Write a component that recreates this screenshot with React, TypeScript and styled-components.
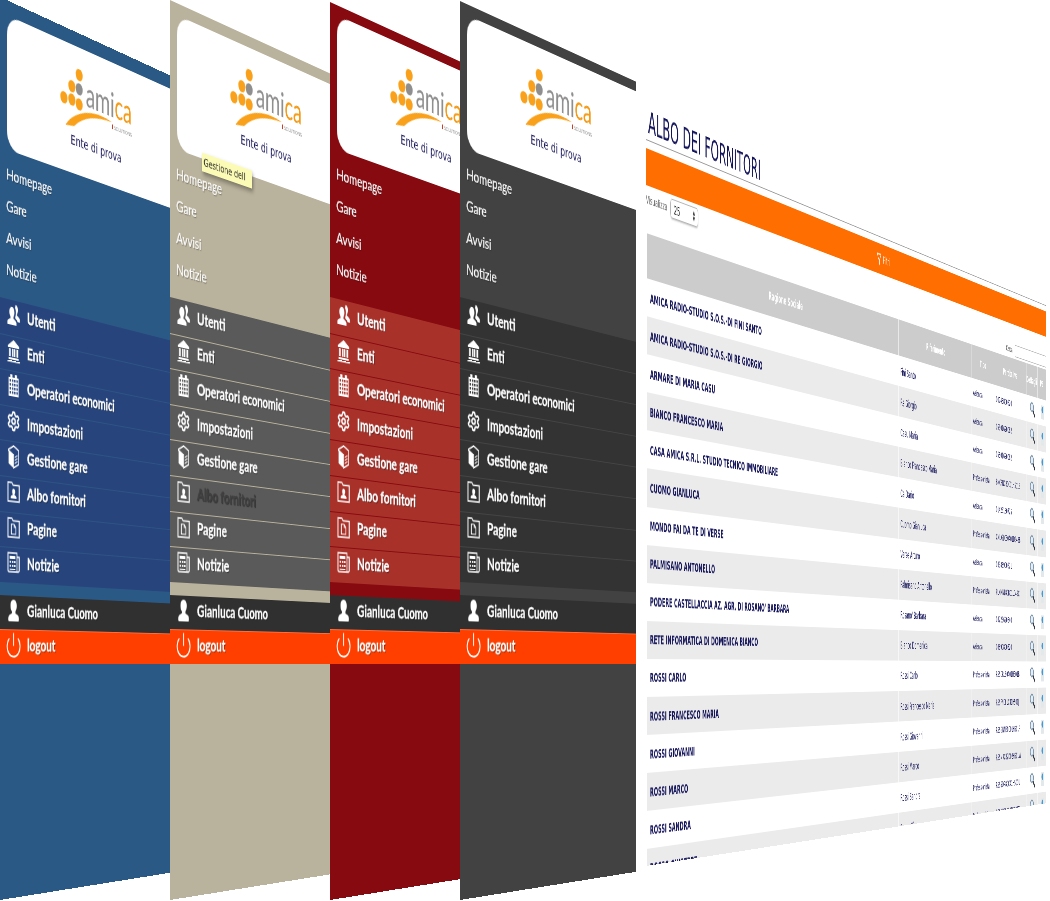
import React from "react";
import styled, { createGlobalStyle } from "styled-components";
import { Filter, Power, Settings } from "lucide-react";

//~~~~~~~~~~~~~~~~~~~Perspective helper
// every sheet leans away towards a vanishing point on the y = 667 line
const HORIZON = 667;
const leaning = (x0: number, y0: number, a: number, g: number) =>
  `matrix3d(${a + x0 * g},${HORIZON * g},0,${g},0,1,0,0,0,0,1,0,${x0},${y0},0,1)`;

//~~~~~~~~~~~~~~~~~~~Data
interface Theme {
  x: number;
  inset: number;
  bg: string;
  nav: string;
  line: string;
  tooltip?: boolean;
  dimAlbo?: boolean;
}

const THEMES: Theme[] = [
  { x: 0, inset: 0, bg: "#2b5985", nav: "#27457c", line: "#2c5484" },
  { x: 170, inset: 3, bg: "#b9b29c", nav: "#5a5a5a", line: "#b9b29c", tooltip: true, dimAlbo: true },
  { x: 330, inset: 5, bg: "#870a10", nav: "#a8322a", line: "#870a10" },
  { x: 460, inset: 4, bg: "#424242", nav: "#333333", line: "#444444" },
];

const LINKS = ["Homepage", "Gare", "Avvisi", "Notizie"];

const MENU = [
  { icon: "users", label: "Utenti" },
  { icon: "bank", label: "Enti" },
  { icon: "building", label: "Operatori economici" },
  { icon: "cog", label: "Impostazioni" },
  { icon: "box", label: "Gestione gare" },
  { icon: "folderUser", label: "Albo fornitori" },
  { icon: "folderFile", label: "Pagine" },
  { icon: "news", label: "Notizie" },
];

const AZ = "Azienda";
const PR = "Professionista";
const SUPPLIERS = [
  ["AMICA RADIO-STUDIO S.O.S.-DI FINI SANTO", "Fini Santo", AZ, "00745800820"],
  ["AMICA RADIO-STUDIO S.O.S.-DI RE GIORGIO", "Re Giorgio", AZ, "05501690082"],
  ["ARMARE DI MARIA CASU", "Casu Maria", AZ, "05501690082"],
  ["BIANCO FRANCESCO MARIA", "Bianco Francesco Maria", PR, "BNCFNC80C01H501B"],
  ["CASA AMICA S.R.L. STUDIO TECNICO IMMOBILIARE", "Ca Dario", AZ, "01428180725"],
  ["CUOMO GIANLUCA", "Cuomo Gianluca", PR, "CMUGLC80A01D643B"],
  ["MONDO FAI DA TE DI VERSE", "Verse Arturo", AZ, "03386900821"],
  ["PALMISANO ANTONELLO", "Palmisano Antonello", PR, "PLMNNL80B01L049C"],
  ["PODERE CASTELLACCIA AZ. AGR. DI ROSANO' BARBARA", "Rosano' Barbara", AZ, "03225690640"],
  ["RETE INFORMATICA DI DOMENICA BIANCO", "Bianco Domenica", AZ, "08890800820"],
  ["ROSSI CARLO", "Rossi Carlo", PR, "RSSCRL80A01H501B"],
  ["ROSSI FRANCESCO MARIA", "Rossi Francesco Maria", PR, "RSSFNC81C41H501J"],
  ["ROSSI GIOVANNI", "Rossi Giovanni", PR, "RSSGNN80C01H501P"],
  ["ROSSI MARCO", "Rossi Marco", PR, "RSSMRC82D02H501W"],
  ["ROSSI SANDRA", "Rossi Sandra", PR, "RSSSDR80C41H501U"],
  ["ROSSO GIUSEPPE", "Rosso Giuseppe", PR, "RSSGPP80A01H501T"],
];

//~~~~~~~~~~~~~~~~~~~Styled Components
const GlobalStyle = createGlobalStyle`
  html, body {
    margin: 0;
    background: #ffffff;
  }
`;

const Stage = styled.div`
  position: relative;
  width: 1050px;
  height: 901px;
  overflow: hidden;
  background: #ffffff;
`;

const Sheet = styled.section<{ $x: number; $inset: number; $bg: string }>`
  position: absolute;
  left: 0;
  top: 0;
  width: 320px;
  height: 903px;
  padding-top: 15px;
  box-sizing: border-box;
  display: flex;
  flex-direction: column;
  background: linear-gradient(
    transparent ${({ $inset }) => $inset}px,
    ${({ $bg }) => $bg} ${({ $inset }) => $inset}px
  );
  transform-origin: 0 0;
  transform: ${({ $x }) => leaning($x, -3, 0.625, 0.00043)};
  font-family: Lato, "Open Sans", sans-serif;
  color: #ffffff;
`;

const BrandCard = styled.div`
  margin-left: 11px;
  height: 135px;
  padding-top: 23px;
  box-sizing: border-box;
  background: #ffffff;
  border-radius: 20px 0 0 20px;
  display: flex;
  flex-direction: column;
  align-items: center;
`;

const EnteName = styled.div`
  font-family: "DejaVu Sans", sans-serif;
  font-size: 14px;
  line-height: 18px;
  color: #1c1a5c;
`;

const TopLinks = styled.ul`
  list-style: none;
  margin: 8px 0 14px;
  padding: 0;
`;

const TopLink = styled.li`
  height: 32px;
  line-height: 32px;
  padding-left: 10px;
  font-size: 16px;
  text-shadow: 1px 1px 1px rgba(0, 0, 0, 0.35);
  -webkit-text-stroke: 0.2px #ffffff;
`;

const Menu = styled.nav<{ $bg: string; $line: string }>`
  background: ${({ $bg }) => $bg};
  display: flex;
  flex-direction: column;
  & > div + div {
    border-top: 1px solid ${({ $line }) => $line};
  }
`;

const MenuRow = styled.div<{ $dim?: boolean }>`
  height: 35.6px;
  box-sizing: border-box;
  padding: 0 0 6px 11px;
  display: flex;
  align-items: center;
  gap: 11px;
  font-size: 17px;
  font-weight: 700;
  white-space: nowrap;
  color: ${({ $dim }) => ($dim ? "#404040" : "#ffffff")};
  text-shadow: 1px 1px 1px rgba(0, 0, 0, 0.45);
  -webkit-text-stroke: 0.3px ${({ $dim }) => ($dim ? "#404040" : "#ffffff")};
  & > svg {
    flex: none;
    color: #ffffff;
    -webkit-text-stroke: 0;
  }
`;

const UserRow = styled(MenuRow)`
  margin-top: 13px;
  height: 34px;
  padding-bottom: 4px;
  background: #303030;
`;

const LogoutRow = styled(MenuRow)`
  height: 35px;
  padding-bottom: 4px;
  background: #ff3f00;
  border-top: 1px solid rgba(255, 255, 255, 0.25);
  & > svg {
    margin: 0 -3px;
  }
`;

const Tooltip = styled.div`
  position: absolute;
  left: 52px;
  top: 144px;
  width: 84px;
  height: 19px;
  overflow: hidden;
  background: #fbfbb6;
  color: #222222;
  font-family: "DejaVu Sans", sans-serif;
  font-size: 11px;
  line-height: 19px;
  padding-left: 3px;
  white-space: nowrap;
  box-shadow: 2px 3px 5px rgba(0, 0, 0, 0.35);
`;

const Page = styled.main`
  position: absolute;
  left: 0;
  top: 0;
  width: 1460px;
  height: 866px;
  overflow: hidden;
  padding-top: 100px;
  box-sizing: border-box;
  transform-origin: 0 0;
  transform: ${leaning(646, 0, 0.4, 0.000315)};
  font-family: "DejaVu Sans", sans-serif;
  color: #14145a;
`;

const PageTitle = styled.h1`
  margin: 0;
  height: 40px;
  padding-left: 5px;
  box-sizing: border-box;
  border-bottom: 1px solid #999999;
  font-size: 29.5px;
  font-weight: 400;
  line-height: 44px;
  white-space: nowrap;
`;

const FilterBar = styled.div`
  margin-top: 8px;
  height: 37px;
  background: #ff6e00;
  color: #ffffff;
  font-size: 12px;
  display: flex;
  align-items: center;
  justify-content: center;
  gap: 6px;
`;

const Toolbar = styled.div`
  height: 48px;
  display: flex;
  justify-content: space-between;
`;

const LengthPicker = styled.div`
  padding-top: 3px;
  height: 22px;
  display: flex;
  align-items: center;
  gap: 8px;
  font-size: 11px;
  color: #666666;
`;

const LengthBox = styled.div`
  width: 74px;
  height: 20px;
  box-sizing: border-box;
  padding: 0 8px;
  border: 1px solid #b5b5b5;
  border-radius: 5px;
  box-shadow: 0 1px 2px rgba(0, 0, 0, 0.25);
  display: flex;
  align-items: center;
  justify-content: space-between;
  font-size: 13px;
  color: #222222;
  & > i {
    font-style: normal;
    font-size: 7px;
    line-height: 7px;
    text-align: center;
    color: #333333;
  }
`;

const SearchBox = styled.label`
  align-self: flex-end;
  margin-bottom: 3px;
  display: flex;
  align-items: center;
  gap: 8px;
  font-size: 11px;
  color: #555555;
  & > span {
    display: block;
    width: 160px;
    height: 17px;
    box-sizing: border-box;
    border: 1px solid #b5b5b5;
    background: #ffffff;
  }
`;

const Table = styled.table`
  margin-left: 2px;
  width: 1458px;
  table-layout: fixed;
  border-collapse: collapse;
`;

const HeadCell = styled.th`
  height: 45px;
  padding: 0;
  background: #cccccc;
  color: #ffffff;
  font-size: 12px;
  font-weight: 700;
  text-align: center;
  overflow: hidden;
  border-right: 3px solid #ffffff;
  &.joined {
    border-right: 0;
  }
`;

const Row = styled.tr<{ $even: boolean }>`
  background: ${({ $even }) => ($even ? "#ebebeb" : "#ffffff")};
`;

const Cell = styled.td`
  height: 38.1px;
  padding: 0 0 0 8px;
  box-sizing: border-box;
  font-size: 11px;
  white-space: nowrap;
  overflow: hidden;
  border-right: 3px solid #ffffff;
  &.joined {
    border-right: 0;
  }
`;

const NameCell = styled(Cell)`
  font-size: 12.6px;
  font-weight: 700;
`;

const ContactCell = styled(Cell)`
  font-size: 12.5px;
`;

const DetailMark = styled.span`
  display: block;
  width: 18px;
  height: 20px;
  margin: 0 auto;
  background: #e3e8eb;
  position: relative;
  &::after {
    content: "";
    position: absolute;
    left: 4px;
    top: 2px;
    width: 10px;
    height: 9px;
    border-radius: 50%;
    background: #3f9ad6;
  }
`;

//~~~~~~~~~~~~~~~~~~~Drawings
const AmicaLogo = (): JSX.Element => (
  <svg width="132" height="68" viewBox="100 38 132 68">
    {[
      [134, 44],
      [121, 59],
      [107, 74],
      [121, 73],
      [134, 75],
    ].map(([cx, cy]) => (
      <circle key={`${cx}-${cy}`} cx={cx} cy={cy} r="6.3" fill="#f9a11b" />
    ))}
    <circle cx="134" cy="59" r="6.3" fill="#8e8e8e" />
    <path d="M110 102C125 84 160 73 194 80 165 80 142 86 125 100Z" fill="#f9a11b" />
    <text x="146" y="74" fontFamily="Lato, sans-serif" fontSize="36" textLength="86" lengthAdjust="spacingAndGlyphs" fill="#8e8e8e">
      ami<tspan fill="#f39a16">ca</tspan>
    </text>
    <text x="198" y="87" fontFamily="Lato, sans-serif" fontSize="6" textLength="34" lengthAdjust="spacingAndGlyphs" fill="#8e8e8e">
      SOLUTIONS
    </text>
    <rect x="194" y="82" width="2" height="5" fill="#c8402a" />
  </svg>
);

const BUILDING_WINDOWS = [5, 9, 13, 17]
  .flatMap((y) => [5, 9, 13, 17].map((x) => `M${x} ${y + 1}h2.400v2.400h-2.400z`))
  .join("");

const Glyph = ({ name }: { name: string }): JSX.Element => {
  const props = {
    width: 22,
    height: 24,
    viewBox: "0 0 24 24",
    preserveAspectRatio: "none",
    fill: "currentColor",
  };
  const line = { fill: "none", stroke: "currentColor", strokeWidth: 1.6 };
  switch (name) {
    case "users":
      return (
        <svg {...props}>
          <path d="M9 4c3 0 4.500 2.400 4.500 5.200 0 2-.8 3.700-1.900 4.800v1.400c2.400.9 4.900 2 5.400 3.600V22H1v-3c.5-1.600 3-2.700 5.400-3.600V14C5.300 12.900 4.500 11.200 4.500 9.200 4.500 6.400 6 4 9 4z" />
          <path d="M15.500 1c2.800 0 4.200 2.200 4.200 4.800 0 1.900-.7 3.500-1.700 4.500v1.300c2.200.8 4.500 1.900 5 3.400v3h-3.800c-.9-1.700-2.600-2.700-4.500-3.500v-1c1-1.200 1.500-2.900 1.500-4.600 0-2-.7-3.800-2-4.900.7-1.300 1.600-3 1.300-3z" />
        </svg>
      );
    case "bank":
      return (
        <svg {...props}>
          <path d="M12 1 2 7v2h20V7zM4 10h3v8H4zM9 10h2.500v8H9zM12.500 10H15v8h-2.500zM17 10h3v8h-3zM3 19h18v2H3zM1 22h22v1.500H1z" />
        </svg>
      );
    case "building":
      return (
        <svg {...props} fillRule="evenodd">
          <path d={`M3 4h3V1h4v3h4V1h4v3h3v19H3z${BUILDING_WINDOWS}`} />
        </svg>
      );
    case "cog":
      return <Settings size={22} strokeWidth={2.4} />;
    case "box":
      return (
        <svg {...props}>
          <path d="M3 6 11.500 10V23L3 19Z" />
          <path d="M12 1 21 5V19L12 23V10L3 6V5Z" {...line} />
          <path d="M14 12.500 19 10M14 15.500 19 13M14 18.500 19 16" {...line} strokeWidth={1.2} />
        </svg>
      );
    case "folderUser":
      return (
        <svg {...props}>
          <path d="M2 3h7l2 2.500h11V22H2z" {...line} />
          <path d="M12 9c1.800 0 2.600 1.400 2.600 3 0 1-.4 1.900-1 2.500v.7c1.500.5 3 1.100 3.400 2V19H7v-1.800c.4-.9 1.900-1.500 3.400-2v-.7c-.6-.6-1-1.500-1-2.500 0-1.600.8-3 2.600-3z" />
        </svg>
      );
    case "folderFile":
      return (
        <svg {...props}>
          <path d="M2 3h7l2 2.500h11V22H2z" {...line} />
          <path d="M8 9h5l3 3v7H8zM13 9v3h3" {...line} strokeWidth={1.2} />
        </svg>
      );
    case "news":
      return (
        <svg {...props}>
          <path d="M2 3h16v19H4a2 2 0 0 1-2-2zM18 7h4v13a2 2 0 0 1-2 2h-2" {...line} />
          <path d="M5 6h10v3H5zM5 11h2.500v2H5zM9 11h2.500v2H9zM13 11h2.500v2H13zM5 15h2.500v2H5zM9 15h2.500v2H9zM13 15h2.500v2H13zM5 19h10v1H5z" />
        </svg>
      );
    default:
      return (
        <svg {...props}>
          <path d="M12 1c3.500 0 5.500 2.800 5.500 6.200 0 2.300-.9 4.300-2.200 5.600V15c2.800.7 5.700 2 6.200 4.500v2c0 1-1 1.500-2 1.500H4.500c-1 0-2-.5-2-1.500v-2c.5-2.500 3.400-3.800 6.200-4.500v-2.200C7.400 11.500 6.500 9.500 6.500 7.200 6.500 3.800 8.500 1 12 1z" />
        </svg>
      );
  }
};

const MagnifierIcon = styled.svg`
  display: block;
  margin: 0 auto;
  width: 28px;
  height: 22px;
`;

const Magnifier = (): JSX.Element => (
  <MagnifierIcon viewBox="0 0 18 20" preserveAspectRatio="none">
    <ellipse cx="7" cy="7" rx="5.500" ry="5.500" fill="#e6eef4" stroke="#7e96ad" strokeWidth="2" />
    <path d="M11 11.500 16 18" stroke="#333a44" strokeWidth="3" strokeLinecap="round" />
  </MagnifierIcon>
);

//~~~~~~~~~~~~~~~~~~~Component
const ThemeSheet = ({ theme }: { theme: Theme }): JSX.Element => (
  <Sheet $x={theme.x} $inset={theme.inset} $bg={theme.bg}>
    <BrandCard>
      <AmicaLogo />
      <EnteName>Ente di prova</EnteName>
    </BrandCard>
    <TopLinks>
      {LINKS.map((link) => (
        <TopLink key={link}>{link}</TopLink>
      ))}
    </TopLinks>
    <Menu $bg={theme.nav} $line={theme.line}>
      {MENU.map((item) => (
        <MenuRow key={item.label} $dim={theme.dimAlbo && item.label === "Albo fornitori"}>
          <Glyph name={item.icon} />
          {item.label}
        </MenuRow>
      ))}
    </Menu>
    <UserRow>
      <Glyph name="user" />
      Gianluca Cuomo
    </UserRow>
    <LogoutRow>
      <Power size={28} strokeWidth={1.5} />
      logout
    </LogoutRow>
    {theme.tooltip && <Tooltip>Gestione dell</Tooltip>}
  </Sheet>
);

const App = (): JSX.Element => {
  //~~~~~~~~~~~~~~~~~~~Render
  return (
    <Stage>
      <GlobalStyle />
      {THEMES.map((theme) => (
        <ThemeSheet key={theme.x} theme={theme} />
      ))}
      <Page>
        <PageTitle>ALBO DEI FORNITORI</PageTitle>
        <FilterBar>
          <Filter size={16} />
          Filtri
        </FilterBar>
        <Toolbar>
          <LengthPicker>
            Visualizza
            <LengthBox>
              25
              <i>
                ▲
                <br />▼
              </i>
            </LengthBox>
          </LengthPicker>
          <SearchBox>
            Cerca:
            <span />
          </SearchBox>
        </Toolbar>
        <Table>
          <colgroup>
            <col style={{ width: 784 }} />
            <col style={{ width: 306 }} />
            <col style={{ width: 108 }} />
            <col style={{ width: 156 }} />
            <col style={{ width: 57 }} />
            <col style={{ width: 47 }} />
          </colgroup>
          <thead>
            <tr>
              <HeadCell>Ragione Sociale</HeadCell>
              <HeadCell>Riferimento</HeadCell>
              <HeadCell className="joined">Tipo</HeadCell>
              <HeadCell>Partita Iva</HeadCell>
              <HeadCell>Dettagli</HeadCell>
              <HeadCell className="joined">PE</HeadCell>
            </tr>
          </thead>
          <tbody>
            {SUPPLIERS.map(([name, contact, kind, vat], index) => (
              <Row key={name} $even={index % 2 === 1}>
                <NameCell>{name}</NameCell>
                <ContactCell>{contact}</ContactCell>
                <Cell className="joined">{kind}</Cell>
                <Cell>{vat}</Cell>
                <Cell>
                  <Magnifier />
                </Cell>
                <Cell className="joined">
                  <DetailMark />
                </Cell>
              </Row>
            ))}
          </tbody>
        </Table>
      </Page>
    </Stage>
  );
};

export default App;
